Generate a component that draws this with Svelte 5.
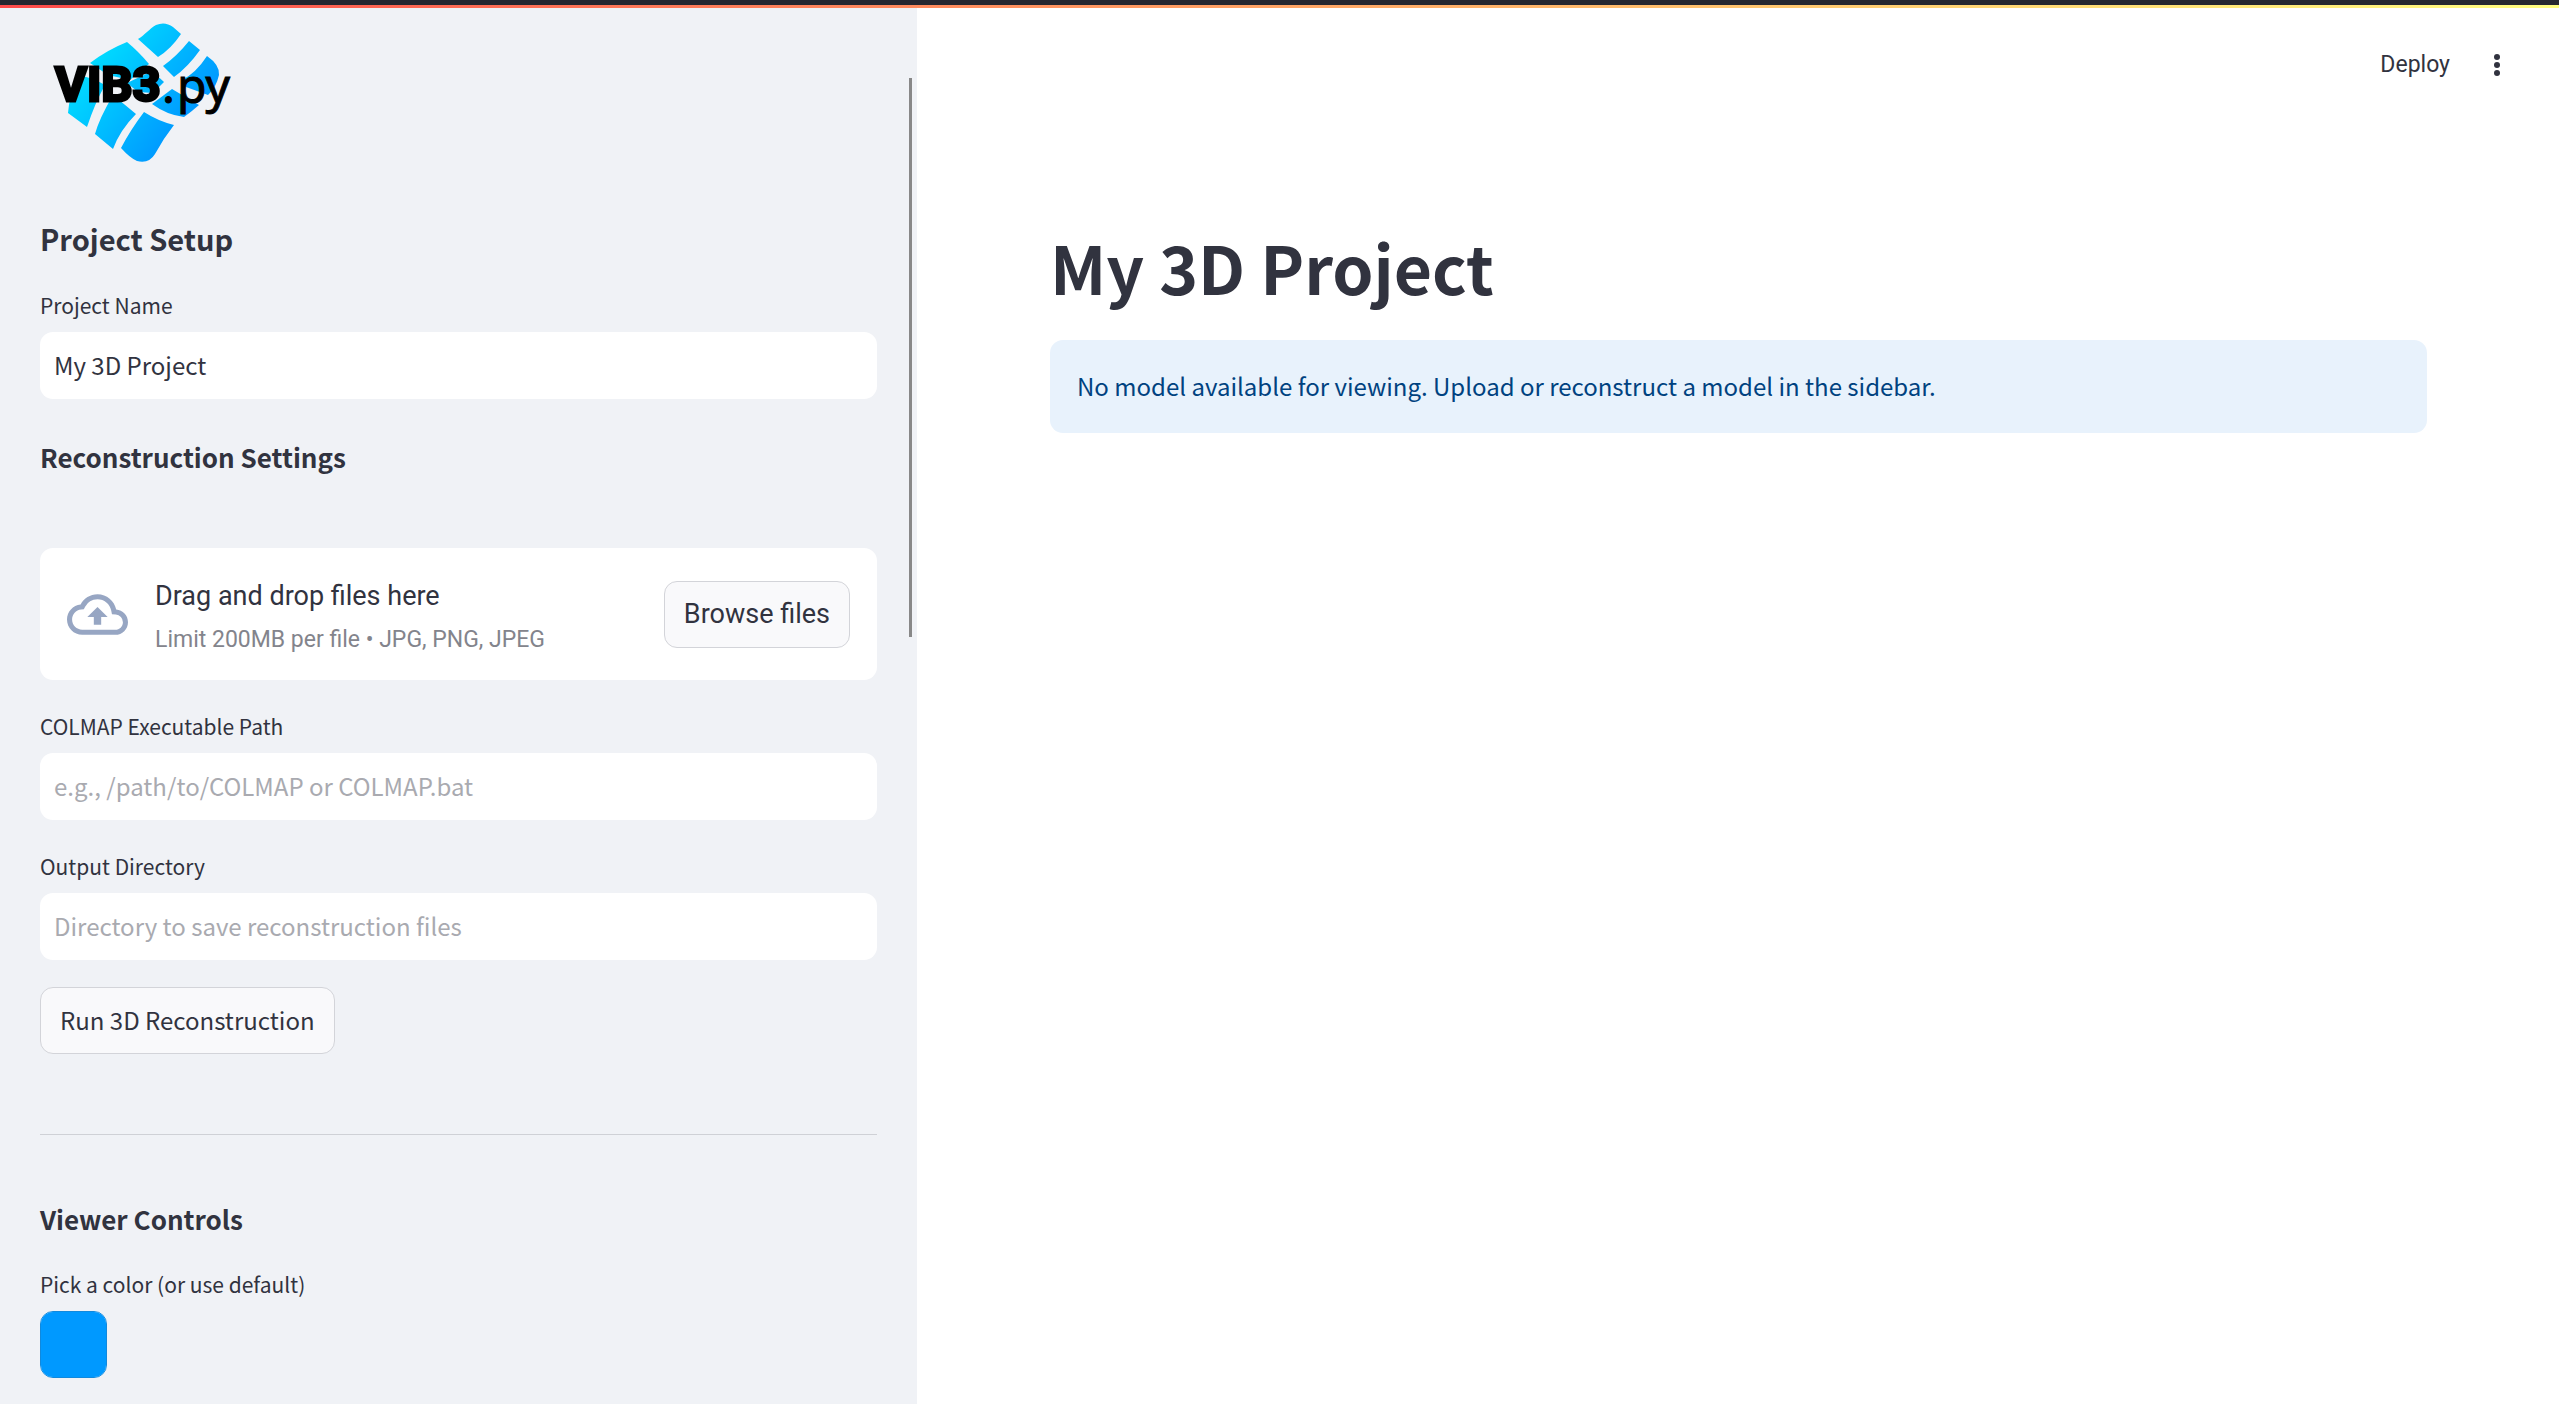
<script>
  let projectName = $state('My 3D Project');
  let colmapPath = $state('');
  let outputDir = $state('');
  let color = $state('#0099ff');
</script>

<div class="app">
  <div class="topbar"></div>
  <div class="columns">
    <aside class="sidebar">
      <svg class="logo" viewBox="40 8 200 170" role="img" aria-label="VIB3.py">
        <defs>
          <linearGradient id="tiles" gradientUnits="userSpaceOnUse" x1="80" y1="60" x2="180" y2="140">
            <stop offset="0" stop-color="#00e1ff" />
            <stop offset="1" stop-color="#0095ff" />
          </linearGradient>
        </defs>
        <g fill="url(#tiles)">
          <path d="M138 39C145 35 149 29 156 25Q165 21 173 27L181 34Q171 49 158 57Z" />
          <path d="M189 41L200 50Q188 67 174 77L163 66Q177 56 189 41Z" />
          <path d="M207 56Q220 65 219 75Q216 88 208 95L186 87L182 80Q196 73 207 56Z" />
          <path d="M127 42Q138 51 149 64L130 80L108 75L90 63Q107 50 127 42Z" />
          <path d="M80 76Q92 77 105 85Q95 103 87 127L68 113Q69 95 80 76Z" />
          <path d="M127 83L152 71L164 82L153 93L138 92Z" />
          <path d="M113 95L136 114Q120 130 113 149L95 134Q99 119 113 95Z" />
          <path d="M172 89L199 105Q191 112 184 117Q167 115 152 104Z" />
          <path d="M144 112Q158 121 174 125Q163 139 155 154Q149 164 137 161Q130 158 121 148Q131 129 144 112Z" />
        </g>
        <text class="logo-main" x="55" y="101">VIB3</text>
        <text class="logo-ext" x="162" y="103">.</text>
        <text class="logo-ext" x="177" y="103">py</text>
      </svg>

      <h2>Project Setup</h2>
      <div class="field">
        <label for="name">Project Name</label>
        <input id="name" type="text" bind:value={projectName} />
      </div>

      <h3 class="settings">Reconstruction Settings</h3>
      <section class="dropzone" aria-label="Upload images">
        <svg class="cloud" viewBox="0 0 24 24" aria-hidden="true">
          <path d="M19.35 10.04C18.67 6.59 15.64 4 12 4 9.11 4 6.6 5.64 5.35 8.04 2.34 8.36 0 10.91 0 14c0 3.31 2.69 6 6 6h13c2.76 0 5-2.24 5-5 0-2.64-2.05-4.78-4.65-4.96zM19 18H6c-2.21 0-4-1.79-4-4 0-2.05 1.53-3.76 3.56-3.97l1.07-.11.5-.95A5.469 5.469 0 0112 6c2.62 0 4.88 1.86 5.39 4.43l.3 1.5 1.53.11A2.98 2.98 0 0122 15c0 1.65-1.35 3-3 3zM8 13h2.55v3h2.9v-3H16l-4-4z" />
        </svg>
        <div class="drop-text">
          <span class="drop-title">Drag and drop files here</span>
          <span class="drop-limit">Limit 200MB per file • JPG, PNG, JPEG</span>
        </div>
        <button class="btn browse" type="button">Browse files</button>
      </section>

      <div class="field spaced">
        <label for="colmap">COLMAP Executable Path</label>
        <input id="colmap" type="text" placeholder="e.g., /path/to/COLMAP or COLMAP.bat" bind:value={colmapPath} />
      </div>
      <div class="field spaced">
        <label for="output">Output Directory</label>
        <input id="output" type="text" placeholder="Directory to save reconstruction files" bind:value={outputDir} />
      </div>
      <button class="btn run" type="button">Run 3D Reconstruction</button>

      <hr />

      <h3>Viewer Controls</h3>
      <div class="field spaced">
        <label for="color">Pick a color (or use default)</label>
        <input id="color" class="swatch" type="color" bind:value={color} />
      </div>
      <div class="scroll-thumb"></div>
    </aside>

    <div class="page">
      <header>
        <button class="plain" type="button">Deploy</button>
        <button class="plain" type="button" aria-label="Main menu">
          <svg class="dots" viewBox="0 0 10 26" aria-hidden="true">
            <circle cx="5" cy="5" r="3" />
            <circle cx="5" cy="13" r="3" />
            <circle cx="5" cy="21" r="3" />
          </svg>
        </button>
      </header>
      <main>
        <h1>{projectName}</h1>
        <div class="info" role="status">No model available for viewing. Upload or reconstruct a model in the sidebar.</div>
      </main>
    </div>
  </div>
</div>

<style>
  .app {
    min-height: 100vh;
    display: flex;
    flex-direction: column;
    background: #fff;
    color: #31333f;
    font-family: 'Noto Sans CJK SC', 'Noto Sans', sans-serif;
    font-size: 24px;
  }
  .app, .app * { box-sizing: border-box; }
  .topbar {
    height: 8px;
    border-top: 5px solid #262730;
    background: linear-gradient(90deg, #ff4b4b, #fffd80) padding-box;
  }
  .columns { flex: 1; display: flex; }
  .sidebar {
    position: relative;
    flex: 0 0 917px;
    padding: 0 40px 26px;
    background: #f0f2f6;
    display: flex;
    flex-direction: column;
  }
  .logo { width: 200px; height: 170px; display: block; }
  .logo-main {
    font-family: Roboto, sans-serif;
    font-weight: 700;
    font-size: 49px;
    stroke: #000;
    stroke-width: 3px;
  }
  .logo-ext {
    font-family: 'Noto Sans', sans-serif;
    font-size: 48px;
    stroke: #000;
    stroke-width: 1px;
  }
  h1, h2, h3 { margin: 0; }
  h1 { font-size: 66px; line-height: 88px; font-weight: 700; }
  h2 { font-size: 29px; line-height: 40px; font-weight: 600; margin: 40px 0 31px; }
  h3 { font-size: 26px; line-height: 38px; font-weight: 600; }
  .settings { margin: 39px 0 72px; }
  .field { display: flex; flex-direction: column; gap: 11px; }
  .spaced { margin-top: 30px; }
  label { font-size: 21px; line-height: 32px; }
  input {
    height: 67px;
    width: 100%;
    border: 0;
    border-radius: 13px;
    padding: 0 14px 2px;
    background: #fff;
    color: inherit;
    font: inherit;
  }
  input::placeholder { color: #a9aab0; opacity: 1; }
  .dropzone {
    height: 132px;
    padding: 0 27px;
    border-radius: 13px;
    background: #fff;
    display: flex;
    align-items: center;
    gap: 27px;
    font-family: Roboto, sans-serif;
  }
  .cloud { width: 61px; height: 61px; fill: #97a6c3; }
  .drop-text {
    flex: 1;
    display: flex;
    flex-direction: column;
    gap: 2px;
    padding-top: 4px;
  }
  .drop-title { font-size: 27px; line-height: 46px; }
  .drop-limit { font-size: 23px; line-height: 38px; color: #83848c; }
  .btn {
    height: 67px;
    padding: 0 19px;
    border: 1px solid #d3d4d9;
    border-radius: 13px;
    background: #f9f9fb;
    color: inherit;
    font: inherit;
  }
  .browse { font-size: 27px; }
  .run { margin-top: 27px; padding-bottom: 2px; align-self: flex-start; }
  hr { width: 100%; margin: 80px 0 65px; border: 0; border-top: 1px solid #cfd1d6; }
  .swatch {
    appearance: none;
    width: 67px;
    padding: 0;
    overflow: hidden;
    border: 1px solid #1189dd;
  }
  .swatch::-webkit-color-swatch-wrapper { padding: 0; }
  .swatch::-webkit-color-swatch { border: 0; }
  .scroll-thumb {
    position: absolute;
    top: 70px;
    right: 5px;
    width: 3px;
    height: 559px;
    background: #888;
  }
  .page { flex: 1; min-width: 0; }
  header {
    height: 113px;
    padding-right: 57px;
    display: flex;
    justify-content: flex-end;
    align-items: center;
    gap: 42px;
  }
  .plain {
    border: 0;
    padding: 0;
    background: none;
    color: inherit;
    font: 23px/34px Roboto, sans-serif;
    display: flex;
  }
  .dots { width: 10px; height: 26px; fill: #31333f; }
  main { padding: 101px 132px 0 133px; }
  .info {
    margin-top: 30px;
    padding: 26px 27px 27px;
    border-radius: 13px;
    background: #e8f2fc;
    color: #004280;
    line-height: 40px;
  }
</style>
